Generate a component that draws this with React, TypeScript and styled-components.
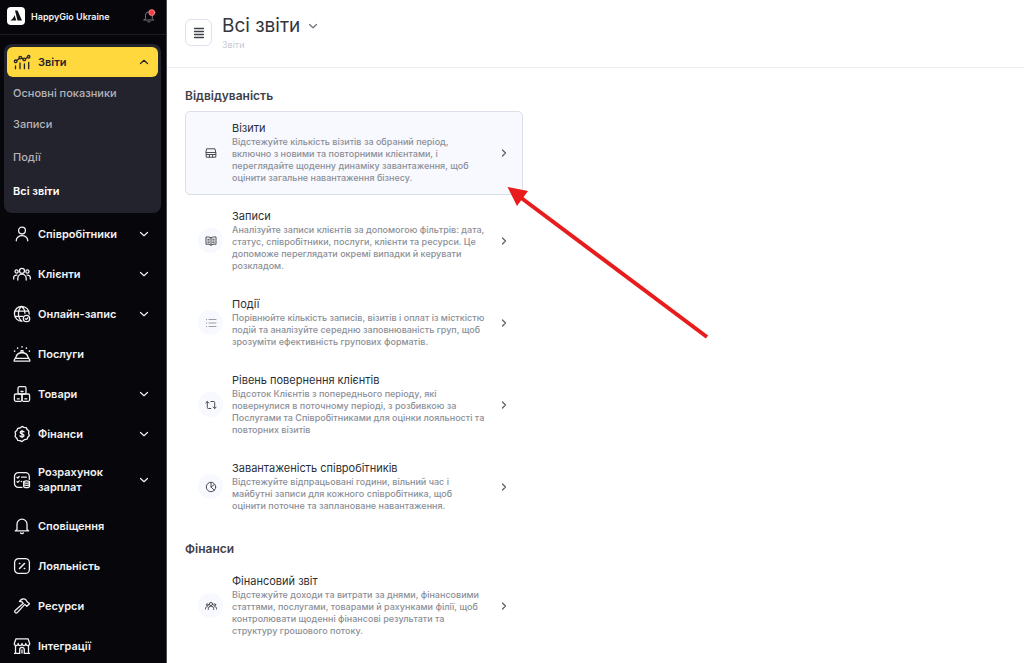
import React from "react";
import styled, { createGlobalStyle } from "styled-components";

const GlobalStyle = createGlobalStyle`
  * { box-sizing: border-box; }
  body { margin: 0; background: #fff; font-family: Inter, "Liberation Sans", sans-serif; color: #33363d; }
  button { font: inherit; color: inherit; background: none; border: 0; padding: 0; cursor: pointer; text-align: left; }
  h1, h2, h3, p, ul { margin: 0; padding: 0; }
  ul { list-style: none; }
  a { color: inherit; text-decoration: none; }
`;

const Layout = styled.div`
  position: relative;
  display: flex;
  height: 100vh;
  overflow: hidden;
`;

const Sidebar = styled.aside`
  flex: 0 0 167px;
  background: #07070b;
  border-right: 1px solid #4b4b50;
  color: #f2f2f4;
  overflow: hidden;
`;

const Brand = styled.div`
  display: flex;
  align-items: center;
  gap: 6px;
  height: 35px;
  padding: 0 10px 2px 7px;
  border-bottom: 1px solid #1b1b22;
`;

const BrandName = styled.a`
  flex: 1;
  font-size: 9px;
  font-weight: 600;
  line-height: 15px;
  white-space: nowrap;
`;

const Group = styled.div`
  margin: 9px 5px 1px 4px;
  padding: 3px 3px 5px;
  border-radius: 8px;
  background: #23232e;
`;

const GroupHead = styled.button`
  display: flex;
  align-items: center;
  width: 100%;
  height: 30px;
  padding: 0 9px 0 6px;
  border-radius: 6px;
  background: #ffd83d;
  color: #26242a;
  font-size: 11px;
  font-weight: 600;
`;

const SubLink = styled.a<{ $active?: boolean }>`
  display: block;
  padding: 9px 6px;
  font-size: 11px;
  line-height: 15px;
  font-weight: ${(p) => (p.$active ? 600 : 500)};
  color: ${(p) => (p.$active ? "#ffffff" : "#b4b4ba")};
`;

const SubList = styled.ul`
  li:first-child a { padding: 9px 6px 8px; }
  li:nth-child(2) a { padding: 8px 6px 9px; }
  li:last-child a { padding: 10px 6px 9px; }
`;

const NavItem = styled.button`
  display: flex;
  align-items: center;
  width: 100%;
  min-height: 40px;
  padding: 11px 17px 11px 13px;
  font-size: 11px;
  font-weight: 600;
  line-height: 15px;
`;

const NavLabel = styled.span`
  flex: 1;
  padding: 0 8px 0 7px;
`;

const Icon = styled.svg<{ $size?: number; $stroke?: number }>`
  flex: none;
  display: block;
  width: ${(p) => p.$size ?? 18}px;
  height: ${(p) => p.$size ?? 18}px;
  fill: none;
  stroke: currentColor;
  stroke-width: ${(p) => p.$stroke ?? 1.3};
  stroke-linecap: round;
  stroke-linejoin: round;
`;

const Main = styled.main`
  flex: 1;
  min-width: 0;
`;

const Header = styled.header`
  display: flex;
  gap: 10px;
  height: 68px;
  margin-bottom: 1px;
  padding: 15px 18px 0;
  border-bottom: 1px solid #eeeff2;
`;

const MenuButton = styled.button`
  display: grid;
  place-items: center;
  width: 27px;
  height: 27px;
  margin-top: 4px;
  border: 1px solid #dfe2ec;
  border-radius: 6px;
`;

const TitleButton = styled.button`
  display: flex;
  align-items: center;
  gap: 8px;
  color: #6d7078;
`;

const Title = styled.h1`
  font-size: 19px;
  font-weight: 400;
  line-height: 21px;
  color: #33363d;
`;

const Crumb = styled.a`
  display: block;
  margin-top: 3px;
  font-size: 9px;
  line-height: 12px;
  color: #c8cbd3;
`;

const Section = styled.section`
  max-width: 374px;
  padding: 19px 18px 0;

  & + & { padding-top: 18px; }
`;

const SectionTitle = styled.h2`
  margin-bottom: 7px;
  font-size: 12px;
  font-weight: 600;
  line-height: 16px;
  color: #3e4149;
`;

const Cards = styled.ul`
  display: grid;
  gap: 4px;
`;

const Card = styled.a<{ $active?: boolean }>`
  display: flex;
  align-items: center;
  padding: 9px 13px 10px 12px;
  border: 1px solid ${(p) => (p.$active ? "#dadfe9" : "transparent")};
  border-radius: 5px;
  background: ${(p) => (p.$active ? "#f7f9fe" : "transparent")};
`;

const Badge = styled.span`
  flex: none;
  display: grid;
  place-items: center;
  width: 25px;
  height: 25px;
  border-radius: 50%;
  background: #f7f9fe;
  color: #4a4d55;
`;

const CardBody = styled.div`
  flex: 1;
  min-width: 0;
  padding: 0 4px 0 9px;
`;

const CardTitle = styled.h3`
  font-size: 11px;
  font-weight: 400;
  line-height: 15px;
  color: #2c2f36;
`;

const CardText = styled.p`
  font-size: 9px;
  font-weight: 500;
  line-height: 12px;
  color: #8c8f98;
  white-space: pre-line;
`;

const Pointer = styled.svg`
  position: absolute;
  left: 500px;
  top: 180px;
  width: 220px;
  height: 165px;
  pointer-events: none;
`;

const Chevron = ({ up = false }: { up?: boolean }) => (
  <Icon $size={10} $stroke={1.2} viewBox="0 0 10 10"><path d={up ? "M1.500 6.500 5 3.300l3.500 3.200" : "M1.500 3.500 5 6.700l3.500-3.200"} /></Icon>
);

const icons: Record<string, React.ReactNode> = {
  chart: <><circle cx="2.700" cy="8.300" r="1.300" /><circle cx="7.300" cy="4.600" r="1.300" /><circle cx="11.300" cy="6.400" r="1.300" /><circle cx="15.600" cy="3.800" r="1.300" /><path d="M3.700 7.400 6.300 5.400M8.500 5.100l1.600.7M12.400 5.700l2.100-1.200M2.500 13v2.700M7 10v5.700M11.400 11v4.700M15.700 9.300v6.400" /></>,
  person: <><circle cx="9" cy="5.600" r="3.400" /><path d="M3.300 15.800v-.6a5.700 4.600 0 0 1 11.400 0v.6" /></>,
  people: <><circle cx="9" cy="5.800" r="2.500" /><path d="M4.800 15v-1.600a4.200 4.200 0 0 1 8.400 0V15" /><circle cx="3.600" cy="6.500" r="1.600" /><circle cx="14.400" cy="6.500" r="1.600" /><path d="M.7 14v-1.400c0-1.500 1.200-2.700 3.200-2.500M17.300 14v-1.400c0-1.500-1.200-2.700-3.200-2.500" /></>,
  globe: <><path d="M16.200 9A7.400 7.400 0 1 0 9 16.200M8.600 1.600C4.400 5 4.400 12.500 8.600 16.200M8.800 1.600c2 1.600 3 4 3.100 6.600M2 6.200h13.600M2 11.400h7.500" /><circle cx="13.500" cy="13.500" r="3.200" /><path d="m12.200 13.600 1 1 1.700-1.900" /></>,
  service: <><path d="M3 12.200a6.100 5.400 0 0 1 12 0L16.800 15v1.200H1.200V15zM2.600 13.300h12.800M8 7V5.600h2V7" /><path d="M9 1.800v.2M4.600 3v.2M13.400 3v.2M1.600 6v.2M16.400 6v.2" strokeWidth="1.600" /></>,
  boxes: <><rect x="5" y="1.700" width="8" height="7.300" rx="1.500" /><rect x="1.400" y="9" width="7.600" height="7.300" rx="1.500" /><rect x="9" y="9" width="7.600" height="7.300" rx="1.500" /><path d="M8 6.500h2M4.300 13.800h2M11.800 13.800h2" /></>,
  coin: <><path d="m9 1.400 2 1 2.200.2 1 2 1.700 1.500-.3 2.300.8 2.100-1.600 1.700-.8 2-2.300.4L9 16.600l-2-1-2.300-.3-.9-2.100-1.700-1.600.5-2.200-.5-2.300L3.800 5.600l.9-2.200L7 3z" /><path d="M11 6.900C10.300 5.800 7.200 5.800 7.200 7.400S11 8.700 11 10.500 7.700 12 7 10.800M9 5.300v7.200" /></>,
  payroll: <><path d="M9 16.300H5.300a3.800 3.800 0 0 1-3.800-3.800v-7a3.800 3.800 0 0 1 3.800-3.800h7.200a3.800 3.800 0 0 1 3.800 3.800v2.800M4 6.200l.8.800 1.400-1.500M8.500 6.200h4.800M4 10.600l.8.800 1.400-1.500" /><ellipse cx="13.600" cy="11" rx="2.900" ry="1.200" /><path d="M10.700 11v4.500c0 1.500 5.800 1.500 5.800 0V11M10.700 13.300c0 1.300 5.800 1.300 5.800 0M8.300 10.500h.3" /></>,
  bell: <path d="M4 12.500V7.200a5 5 0 0 1 10 0v5.300l1.700 1.400H2.300zM7.600 15.900c.3.800 2.500.8 2.800 0" />,
  percent: <><rect x="1.600" y="1.600" width="14.800" height="14.800" rx="4" /><path d="m6.500 11.500 5-5M6.400 6.400h.4M11.300 11.500h.4" strokeWidth="1.500" /></>,
  hammer: <path d="M6.500 4.300c2-2.500 4.600-3.200 6.500-1.300l1.300 2 2.200 1.700-2.700 2.600-2-1.900-7.500 8.200c-1.600 1.400-3.500-.6-2.100-2.200l8.100-7.100-1.200-1.400z" />,
  store: <path d="M3 1.800h12l1.700 4.700c0 2.700-3.800 2.700-3.900 0 0 2.700-3.700 2.700-3.800 0-.1 2.700-3.800 2.700-3.800 0-.1 2.700-3.900 2.700-3.900 0zM2.500 8.800v7.500M15.500 8.800v7.500M1.500 16.400h5.200v-3.800a2.300 2.300 0 0 1 4.600 0v3.800h5.200M9 13v3" />,
};

const cardIcons: Record<string, React.ReactNode> = {
  visits: <path d="M2 1.800h8l.8 3.700H1.200zM1.200 5.500v4.700h9.600V5.500M1.200 7.500h9.600M4.400 7.500v2.700M7.600 7.500v2.700" />,
  book: <path d="M6 2.800C4.800 2 3 1.800 1 2v7.300c2-.2 3.800 0 5 1 1.200-1 3-1.200 5-1V2c-2-.2-3.800 0-5 .8zv7.300M2.800 4.300h1.500M2.800 6h1.500M7.700 4.300h1.500M7.700 6h1.500M2.800 7.700h1.500M7.700 7.700h1.500" />,
  list: <path d="M1.300 2.500h.4M1.300 6h.4M1.300 9.500h.4M4 2.500h7M4 6h7M4 9.500h7" stroke="#9a9da8" />,
  repeat: <path d="M.8 4 2.300 2.500 3.800 4M2.300 2.500v6c0 .7.300 1 1 1h2.500M6 2.500h2.700c.7 0 1 .3 1 1v6M8.200 8l1.500 1.500L11.200 8" />,
  pie: <><circle cx="6" cy="6" r="4.700" /><path d="M6 1.300V6l3.300 3.300M6 6l3.600-2.600" /></>,
  people: <><circle cx="6" cy="4" r="1.600" /><path d="M3.300 9.500V8.700a2.700 2.600 0 0 1 5.400 0v.8" /><circle cx="2.300" cy="4.800" r="1" /><circle cx="9.700" cy="4.800" r="1" /><path d="M.5 9V8.200c0-1 .8-1.600 1.800-1.500M11.500 9V8.200c0-1-.8-1.600-1.800-1.500" /></>,
};

const nav = [
  { label: "Співробітники", icon: "person", more: true },
  { label: "Клієнти", icon: "people", more: true },
  { label: "Онлайн-запис", icon: "globe", more: true },
  { label: "Послуги", icon: "service" },
  { label: "Товари", icon: "boxes", more: true },
  { label: "Фінанси", icon: "coin", more: true },
  { label: "Розрахунок зарплат", icon: "payroll", more: true },
  { label: "Сповіщення", icon: "bell" },
  { label: "Лояльність", icon: "percent" },
  { label: "Ресурси", icon: "hammer" },
  { label: "Інтеграції", icon: "store" },
];

const subLinks = ["Основні показники", "Записи", "Події", "Всі звіти"];

const sections = [
  {
    title: "Відвідуваність",
    cards: [
      { icon: "visits", title: "Візити", text: "Відстежуйте кількість візитів за обраний період,\nвключно з новими та повторними клієнтами, і\nпереглядайте щоденну динаміку завантаження, щоб\nоцінити загальне навантаження бізнесу.", active: true },
      { icon: "book", title: "Записи", text: "Аналізуйте записи клієнтів за допомогою фільтрів: дата,\nстатус, співробітники, послуги, клієнти та ресурси. Це\nдопоможе переглядати окремі випадки й керувати\nрозкладом." },
      { icon: "list", title: "Події", text: "Порівнюйте кількість записів, візитів і оплат із місткістю\nподій та аналізуйте середню заповнюваність груп, щоб\nзрозуміти ефективність групових форматів." },
      { icon: "repeat", title: "Рівень повернення клієнтів", text: "Відсоток Клієнтів з попереднього періоду, які\nповернулися в поточному періоді, з розбивкою за\nПослугами та Співробітниками для оцінки лояльності та\nповторних візитів" },
      { icon: "pie", title: "Завантаженість співробітників", text: "Відстежуйте відпрацьовані години, вільний час і\nмайбутні записи для кожного співробітника, щоб\nоцінити поточне та заплановане навантаження." },
    ],
  },
  {
    title: "Фінанси",
    cards: [
      { icon: "people", title: "Фінансовий звіт", text: "Відстежуйте доходи та витрати за днями, фінансовими\nстаттями, послугами, товарами й рахунками філії, щоб\nконтролювати щоденні фінансові результати та\nструктуру грошового потоку." },
    ],
  },
];

export default function App() {
  return (
    <Layout>
      <GlobalStyle />
      <Sidebar>
        <Brand>
          <Icon viewBox="0 0 18 18">
            <rect width="18" height="18" rx="4" fill="#fff" stroke="none" />
            <path d="M8 3.500h2.500l4.500 10h-4.500z" fill="#111116" stroke="none" />
            <path d="M7.500 8 9.300 13.500H3.200C5.500 12.500 6.800 10.500 7.500 8z" fill="#111116" stroke="none" />
          </Icon>
          <BrandName href="#">HappyGio Ukraine</BrandName>
          <button aria-label="Сповіщення">
            <Icon $size={14} viewBox="0 0 14 14">
              <path d="M3.500 9.500V6.200a3.300 3.300 0 0 1 6.800 0v3.300l1.400 1.500H2zM5.700 12.800h2.400" stroke="#74747c" strokeWidth="1" />
              <circle cx="9.800" cy="3.600" r="3" fill="#ff3b42" stroke="#f3b3b8" strokeWidth=".6" />
            </Icon>
          </button>
        </Brand>
        <nav>
          <Group>
            <GroupHead aria-expanded="true">
              <Icon viewBox="0 0 18 18">{icons.chart}</Icon>
              <NavLabel>Звіти</NavLabel>
              <Chevron up />
            </GroupHead>
            <SubList>
              {subLinks.map((s, i) => (
                <li key={s}><SubLink href="#" $active={i === 3}>{s}</SubLink></li>
              ))}
            </SubList>
          </Group>
          {nav.map((n) => (
            <NavItem key={n.label}>
              <Icon viewBox="0 0 18 18">{icons[n.icon]}</Icon>
              <NavLabel>{n.label}</NavLabel>
              {n.more && <Chevron />}
            </NavItem>
          ))}
        </nav>
      </Sidebar>
      <Main>
        <Header>
          <MenuButton aria-label="Меню">
            <Icon $size={12} viewBox="0 0 12 12"><path d="M1.500 1.500h9M1.500 4.500h9M1.500 7.500h9M1.500 10.500h9" stroke="#3e4149" /></Icon>
          </MenuButton>
          <div>
            <TitleButton><Title>Всі звіти</Title><Chevron /></TitleButton>
            <Crumb href="#">Звіти</Crumb>
          </div>
        </Header>
        {sections.map((s) => (
          <Section key={s.title}>
            <SectionTitle>{s.title}</SectionTitle>
            <Cards>
              {s.cards.map((c) => (
                <li key={c.title}>
                  <Card href="#" $active={c.active}>
                    <Badge><Icon $size={12} $stroke={1} viewBox="0 0 12 12">{cardIcons[c.icon]}</Icon></Badge>
                    <CardBody>
                      <CardTitle>{c.title}</CardTitle>
                      <CardText>{c.text}</CardText>
                    </CardBody>
                    <Icon $size={10} $stroke={1.2} viewBox="0 0 10 10"><path d="M3.500 2 6.500 5l-3 3" stroke="#5b5e66" /></Icon>
                  </Card>
                </li>
              ))}
            </Cards>
          </Section>
        ))}
      </Main>
      <Pointer viewBox="0 0 220 165" aria-hidden="true">
        <path d="M20 17 207 157" stroke="#e81c1c" strokeWidth="4" />
        <path d="M7.500 7 28 11 17 26z" fill="#e81c1c" />
      </Pointer>
    </Layout>
  );
}
